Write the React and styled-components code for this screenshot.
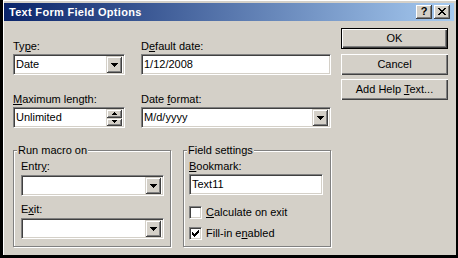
import React from 'react';
import styled, { createGlobalStyle } from 'styled-components';

const GlobalStyle = createGlobalStyle`
  html, body {
    margin: 0;
    padding: 0;
    background: #d4d0c8;
  }
  body {
    font-family: "Liberation Sans", Arial, sans-serif;
    font-size: 11px;
    color: #000;
  }
`;

const Window = styled.div`
  width: 458px;
  height: 258px;
  box-sizing: border-box;
  background: #d4d0c8;
  border-style: solid;
  border-color: #000;
  border-width: 0 2px 3px 3px;
  box-shadow: inset 1px 1px 0 #fff;
  padding: 3px 2px 0 1px;
  display: flex;
  flex-direction: column;
`;

const TitleBar = styled.div`
  height: 18px;
  display: flex;
  align-items: center;
  padding: 0 4px 0 5px;
  background: linear-gradient(to right, #0a246a, #a6caf0);
  color: #fff;
  font-weight: bold;
  font-size: 11px;
`;

const TitleText = styled.span`
  white-space: nowrap;
  letter-spacing: 0.3px;
`;

const CaptionButtons = styled.div`
  margin-left: auto;
  display: flex;
  gap: 2px;
`;

const CaptionButton = styled.div`
  width: 16px;
  height: 14px;
  box-sizing: border-box;
  background: #d4d0c8;
  box-shadow: inset -1px -1px #404040, inset 1px 1px #fff, inset -2px -2px #808080;
  display: flex;
  align-items: center;
  justify-content: center;
  color: #000;
  font-weight: bold;
  font-size: 11px;
  line-height: 11px;
  padding-bottom: 1px;
`;

const DialogBody = styled.div`
  display: flex;
  align-items: flex-start;
  gap: 10px;
  padding: 7px 9px 0 9px;
`;

const FormArea = styled.div`
  width: 318px;
  margin-top: 12px;
  display: flex;
  flex-direction: column;
`;

const FieldGrid = styled.div`
  display: grid;
  grid-template-columns: 112px 190px;
  column-gap: 16px;
  row-gap: 18px;
`;

const Field = styled.div`
  display: flex;
  flex-direction: column;
  gap: ${p => p.$gap ?? 1}px;
  margin-top: ${p => p.$top ?? 0}px;
`;

const Label = styled.label`
  line-height: 13px;
  white-space: nowrap;
`;

const Sunken = styled.div`
  height: 21px;
  box-sizing: border-box;
  border: 1px solid;
  border-color: #808080 #fff #fff #808080;
  box-shadow: inset 1px 1px #404040, inset -1px -1px #d4d0c8;
  background: #fff;
  display: flex;
  align-items: center;
  padding: 2px 2px 2px 2px;
`;

const Value = styled.span`
  flex: 1;
  white-space: nowrap;
  line-height: 13px;
`;

const DropButton = styled.div`
  width: 16px;
  height: 17px;
  box-sizing: border-box;
  background: #d4d0c8;
  box-shadow: inset 1px 1px #d4d0c8, inset -1px -1px #404040, inset 2px 2px #fff, inset -2px -2px #808080;
  display: flex;
  align-items: center;
  justify-content: center;
`;

const SpinButtons = styled.div`
  width: 16px;
  height: 17px;
  display: flex;
  flex-direction: column;
`;

const SpinButton = styled(DropButton)`
  height: auto;
  flex: 1;
`;

const GroupRow = styled.div`
  display: flex;
  gap: 12px;
  margin-top: 22px;
`;

const GroupBox = styled.div`
  position: relative;
  width: ${p => p.$width}px;
  height: 97px;
  box-sizing: border-box;
  border: 1px solid #808080;
  box-shadow: 1px 1px 0 #fff, inset 1px 1px 0 #fff;
  padding: 9px ${p => p.$pr}px 0 ${p => p.$pl}px;
  display: flex;
  flex-direction: column;
`;

const GroupCaption = styled.span`
  position: absolute;
  top: -7px;
  left: 3px;
  padding: 0 1px;
  line-height: 13px;
  background: #d4d0c8;
  white-space: nowrap;
`;

const CheckList = styled.div`
  display: flex;
  flex-direction: column;
  gap: 8px;
  margin-top: 11px;
`;

const CheckRow = styled.div`
  display: flex;
  align-items: center;
  gap: 4px;
  line-height: 13px;
`;

const CheckBox = styled.div`
  width: 13px;
  height: 13px;
  box-sizing: border-box;
  border: 1px solid;
  border-color: #808080 #fff #fff #808080;
  box-shadow: inset 1px 1px #404040, inset -1px -1px #d4d0c8;
  background: #fff;
  display: flex;
  align-items: center;
  justify-content: center;
`;

const ButtonColumn = styled.div`
  display: flex;
  flex-direction: column;
  gap: 4px;
`;

const PushButton = styled.button`
  width: 107px;
  height: 21px;
  box-sizing: border-box;
  margin: 0 0 ${p => (p.$default ? 1 : 0)}px 0;
  padding: 0;
  font: inherit;
  color: #000;
  background: #d4d0c8;
  border: ${p => (p.$default ? '1px solid #000' : 'none')};
  box-shadow: inset 1px 1px #fff, inset -1px -1px #404040, inset -2px -2px #808080;
  text-align: center;
  line-height: 13px;
`;

const PixelIcon = ({ w, h, d }) => (
  <svg width={w} height={h} viewBox={`0 0 ${w} ${h}`} shapeRendering="crispEdges">
    <path d={d} fill="#000" />
  </svg>
);

const downArrow = 'M0 0h7v1H0z M1 1h5v1H1z M2 2h3v1H2z M3 3h1v1H3z';
const spinUp = 'M2 0h1v1H2z M1 1h3v1H1z M0 2h5v1H0z';
const spinDown = 'M0 0h5v1H0z M1 1h3v1H1z M2 2h1v1H2z';
const closeGlyph =
  'M0 0h2v1H0z M6 0h2v1H6z M1 1h2v1H1z M5 1h2v1H5z M2 2h4v1H2z M3 3h2v1H3z M2 4h4v1H2z M1 5h2v1H1z M5 5h2v1H5z M0 6h2v1H0z M6 6h2v1H6z';
const checkGlyph =
  'M6 0h1v1H6z M5 1h2v1H5z M0 2h1v1H0z M4 2h3v1H4z M0 3h2v1H0z M3 3h3v1H3z M0 4h5v1H0z M1 5h3v1H1z M2 6h1v1H2z';

function ComboBox({ value }) {
  return (
    <Sunken>
      <Value>{value}</Value>
      <DropButton>
        <PixelIcon w={7} h={4} d={downArrow} />
      </DropButton>
    </Sunken>
  );
}

function SpinBox({ value }) {
  return (
    <Sunken>
      <Value>{value}</Value>
      <SpinButtons>
        <SpinButton>
          <PixelIcon w={5} h={3} d={spinUp} />
        </SpinButton>
        <SpinButton>
          <PixelIcon w={5} h={3} d={spinDown} />
        </SpinButton>
      </SpinButtons>
    </Sunken>
  );
}

function TextBox({ value }) {
  return (
    <Sunken>
      <Value>{value}</Value>
    </Sunken>
  );
}

function Check({ checked, children }) {
  return (
    <CheckRow>
      <CheckBox>{checked && <PixelIcon w={7} h={7} d={checkGlyph} />}</CheckBox>
      <span>{children}</span>
    </CheckRow>
  );
}

export default function App() {
  return (
    <>
      <GlobalStyle />
      <Window>
        <TitleBar>
          <TitleText>Text Form Field Options</TitleText>
          <CaptionButtons>
            <CaptionButton>?</CaptionButton>
            <CaptionButton>
              <PixelIcon w={8} h={7} d={closeGlyph} />
            </CaptionButton>
          </CaptionButtons>
        </TitleBar>

        <DialogBody>
          <FormArea>
            <FieldGrid>
              <Field>
                <Label>Ty<u>p</u>e:</Label>
                <ComboBox value="Date" />
              </Field>
              <Field>
                <Label>D<u>e</u>fault date:</Label>
                <TextBox value="1/12/2008" />
              </Field>
              <Field>
                <Label><u>M</u>aximum length:</Label>
                <SpinBox value="Unlimited" />
              </Field>
              <Field>
                <Label>Date <u>f</u>ormat:</Label>
                <ComboBox value="M/d/yyyy" />
              </Field>
            </FieldGrid>

            <GroupRow>
              <GroupBox $width={158} $pl={7} $pr={6}>
                <GroupCaption>Run macro on</GroupCaption>
                <Field $gap={2}>
                  <Label>Entr<u>y</u>:</Label>
                  <ComboBox value="" />
                </Field>
                <Field $gap={2} $top={7}>
                  <Label>E<u>x</u>it:</Label>
                  <ComboBox value="" />
                </Field>
              </GroupBox>

              <GroupBox $width={148} $pl={5} $pr={7}>
                <GroupCaption>Field settings</GroupCaption>
                <Field>
                  <Label><u>B</u>ookmark:</Label>
                  <TextBox value="Text11" />
                </Field>
                <CheckList>
                  <Check><u>C</u>alculate on exit</Check>
                  <Check checked>Fill-in e<u>n</u>abled</Check>
                </CheckList>
              </GroupBox>
            </GroupRow>
          </FormArea>

          <ButtonColumn>
            <PushButton $default>OK</PushButton>
            <PushButton>Cancel</PushButton>
            <PushButton>Add Help <u>T</u>ext...</PushButton>
          </ButtonColumn>
        </DialogBody>
      </Window>
    </>
  );
}
